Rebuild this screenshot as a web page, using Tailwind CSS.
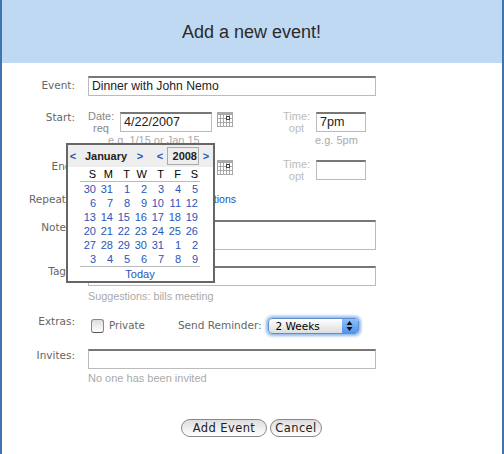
<!DOCTYPE html>
<html lang="en">
<head>
    <meta charset="UTF-8">
    <title>Add a new event!</title>
    <script src="https://cdn.jsdelivr.net/npm/@tailwindcss/browser@4"></script>
</head>
<body class="bg-white font-['Liberation_Sans',Arial,sans-serif]">
    <div class="relative w-[504px] h-[454px] overflow-hidden border-x-2 border-[#3f74b0]">
        <header class="h-[63px] bg-[#bfd9f3] flex items-center justify-center text-[18px] text-[#2a2a2a] pt-[1px] pr-[1px]">Add a new event!</header>

        <form class="pt-[13px] text-[11px] text-[#666] font-['DejaVu_Sans',sans-serif]">
            <!-- event -->
            <div class="flex h-[20px] items-center">
                <label class="w-[73px] text-right text-[10.5px]">Event:</label>
                <div class="ml-[13px] w-[288px] h-[20px] border border-[#bbb] border-t-[#777] border-t-2 pl-[3px] text-[12.2px] leading-[17px] text-[#222] font-['Liberation_Sans',sans-serif]">Dinner with John Nemo</div>
            </div>

            <!-- start -->
            <div class="flex h-[20px] mt-[16px]">
                <label class="w-[73px] text-right text-[10.5px] leading-[10px]">Start:</label>
                <div class="ml-[13px] w-[26px] text-center text-[11px] leading-[12px] -mt-[2px] text-[#888] font-['Liberation_Sans',sans-serif]">Date:<br>req</div>
                <div class="ml-[6px] w-[92px] h-[20px] border border-[#bbb] border-t-[#777] border-t-2 pl-[3px] text-[12.6px] leading-[17px] text-[#222] font-['Liberation_Sans',sans-serif]">4/22/2007</div>
                <svg class="ml-[5px]" width="16" height="15" viewBox="0 0 16 15">
                    <rect x="0" y="0" width="16" height="15" fill="#fff"/>
                    <rect x="0" y="0" width="16" height="3" fill="#aaa"/>
                    <path d="M.5 0v15M3.500 3v12M6.500 3v12M9.500 3v12M12.500 3v12M15.500 0v15M0 2.500h16M0 6.500h16M0 10.500h16M0 14.500h16" stroke="#a8a8a8"/>
                    <rect x="9.500" y="4.500" width="3" height="3" fill="#fff" stroke="#444"/>
                </svg>
                <div class="ml-[50px] w-[27px] text-center text-[11px] leading-[12px] -mt-[2px] text-[#bbb] font-['Liberation_Sans',sans-serif]">Time:<br>opt</div>
                <div class="ml-[6px] w-[50px] h-[20px] border border-[#bbb] border-t-[#777] border-t-2 pl-[3px] text-[12.6px] leading-[17px] text-[#222] font-['Liberation_Sans',sans-serif]">7pm</div>
            </div>
            <div class="flex h-[12px] mt-[2px] text-[11px] leading-[12px] text-[#aaa] font-['Liberation_Sans',sans-serif]">
                <span class="ml-[106px] w-[207px]">e.g. 1/15 or Jan 15</span>
                <span>e.g. 5pm</span>
            </div>

            <!-- end -->
            <div class="flex h-[20px] mt-[14px]">
                <label class="w-[73px] text-right text-[10.5px] leading-[12px]">End:</label>
                <div class="ml-[13px] w-[26px]"></div>
                <div class="ml-[6px] w-[92px] h-[20px] border border-[#bbb] border-t-[#777] border-t-2"></div>
                <svg class="ml-[5px]" width="16" height="15" viewBox="0 0 16 15">
                    <rect x="0" y="0" width="16" height="15" fill="#fff"/>
                    <rect x="0" y="0" width="16" height="3" fill="#aaa"/>
                    <path d="M.5 0v15M3.500 3v12M6.500 3v12M9.500 3v12M12.500 3v12M15.500 0v15M0 2.500h16M0 6.500h16M0 10.500h16M0 14.500h16" stroke="#a8a8a8"/>
                    <rect x="9.500" y="4.500" width="3" height="3" fill="#fff" stroke="#444"/>
                </svg>
                <div class="ml-[50px] w-[27px] text-center text-[11px] leading-[12px] -mt-[2px] text-[#bbb] font-['Liberation_Sans',sans-serif]">Time:<br>opt</div>
                <div class="ml-[6px] w-[50px] h-[20px] border border-[#bbb] border-t-[#777] border-t-2"></div>
            </div>

            <!-- repeat -->
            <div class="flex h-[14px] mt-[13px] items-center">
                <label class="w-[73px] text-right text-[10.5px]">Repeats:</label>
                <a class="ml-[13px] w-[148px] text-right text-[10.5px] text-[#1a4fb5] font-['Liberation_Sans',sans-serif]">Show options</a>
            </div>

            <!-- notes -->
            <div class="flex h-[30px] mt-[13px]">
                <label class="w-[73px] text-right text-[10.5px] leading-[14px]">Notes:</label>
                <div class="ml-[13px] w-[288px] h-[30px] border border-[#bbb] border-t-[#777] border-t-2"></div>
            </div>

            <!-- tags -->
            <div class="flex h-[20px] mt-[16px]">
                <label class="w-[73px] text-right text-[10.5px] leading-[11px]">Tags:</label>
                <div class="ml-[13px] w-[288px] h-[20px] border border-[#bbb] border-t-[#777] border-t-2"></div>
            </div>
            <div class="ml-[86px] h-[12px] mt-[4px] text-[10.8px] leading-[12px] text-[#aaa] font-['Liberation_Sans',sans-serif]">Suggestions: bills meeting</div>

            <!-- extras -->
            <div class="flex h-[20px] mt-[14px] items-center">
                <label class="w-[73px] text-right text-[10.5px] -mt-[8px]">Extras:</label>
                <span class="ml-[16px] w-[13px] h-[14px] rounded-[3px] border border-[#888] border-b-[#555] bg-linear-to-b from-[#ddd] to-[#fff]"></span>
                <span class="ml-[5px] text-[10.3px]">Private</span>
                <span class="ml-[33px] text-[10.5px]">Send Reminder:</span>
                <div class="ml-[6px] w-[91px] h-[16px] rounded-[4px] border border-[#5b8fd0] shadow-[0_0_3px_2px_#8fb8e8] bg-linear-to-b from-[#fff] to-[#ddd] flex overflow-hidden">
                    <span class="flex-1 pl-[7px] text-[10.5px] leading-[14px] text-black">2 Weeks</span>
                    <span class="w-[16px] bg-linear-to-b from-[#8fc0f5] to-[#4f94ec] flex flex-col items-center justify-center gap-[2px]">
                        <svg width="7" height="4" viewBox="0 0 7 4"><path d="M3.500 0L6.500 4H.5z" fill="#111"/></svg>
                        <svg width="7" height="4" viewBox="0 0 7 4"><path d="M3.500 4L6.500 0H.5z" fill="#111"/></svg>
                    </span>
                </div>
            </div>

            <!-- invites -->
            <div class="flex h-[20px] mt-[13px]">
                <label class="w-[73px] text-right text-[10.5px] leading-[14px] -mt-[1px]">Invites:</label>
                <div class="ml-[13px] w-[288px] h-[20px] border border-[#bbb] border-t-[#777] border-t-2"></div>
            </div>
            <div class="ml-[86px] h-[12px] mt-[3px] text-[11px] leading-[12px] text-[#aaa] font-['Liberation_Sans',sans-serif]">No one has been invited</div>

            <!-- buttons -->
            <div class="flex mt-[35px] ml-[179px] gap-[3px] text-[11.5px] tracking-[0.4px] text-[#222]">
                <button type="button" class="w-[86px] h-[18px] rounded-[9px] border border-[#888] bg-linear-to-b from-[#ddd] to-[#fff] leading-[15px]">Add Event</button>
                <button type="button" class="w-[52px] h-[18px] rounded-[9px] border border-[#888] bg-linear-to-b from-[#ddd] to-[#fff] leading-[15px]">Cancel</button>
            </div>
        </form>

        <!-- date picker popup, sits over the form -->
        <div class="absolute left-[64px] top-[143px] w-[149px] h-[140px] border-[2px] border-[#666] bg-white text-[11px] font-['Liberation_Sans',sans-serif]">
            <div class="h-[22px] bg-[#eee] flex items-center text-[#222] font-bold">
                <span class="w-[10px] text-center text-[#2a56b8]">&lt;</span>
                <span class="ml-[6px] w-[44px] text-center">January</span>
                <span class="ml-[7px] w-[10px] text-center text-[#2a56b8]">&gt;</span>
                <span class="ml-[10px] w-[10px] text-center text-[#2a56b8]">&lt;</span>
                <span class="ml-[2px] w-[32px] h-[18px] text-right pr-[1px] leading-[16px] border border-[#aaa]">2008</span>
                <span class="ml-[2px] w-[10px] text-center text-[#2a56b8]">&gt;</span>
            </div>
            <div class="ml-[12px] w-[120px] h-[15px] border-b border-[#bbb]">
                <div class="-ml-[1px] grid grid-cols-[repeat(7,17px)] text-right leading-[14px] text-black">
                    <span>S</span><span>M</span><span>T</span><span>W</span><span>T</span><span>F</span><span>S</span>
                </div>
            </div>
            <div id="days" class="ml-[11px] grid grid-cols-[repeat(7,17px)] text-right leading-[14px] text-[#2a56b8]"></div>
            <div class="ml-[12px] w-[120px] border-t border-[#bbb] text-center leading-[14px] text-[#2a56b8]">Today</div>
        </div>
    </div>

    <script>
        const days = [30,31,1,2,3,4,5,6,7,8,9,10,11,12,13,14,15,16,17,18,19,20,21,22,23,24,25,26,27,28,29,30,31,1,2,3,4,5,6,7,8,9];
        const daysGrid = document.getElementById('days');
        days.forEach(day => {
            const cell = document.createElement('span');
            cell.textContent = day;
            daysGrid.appendChild(cell);
        });
    </script>
</body>
</html>
